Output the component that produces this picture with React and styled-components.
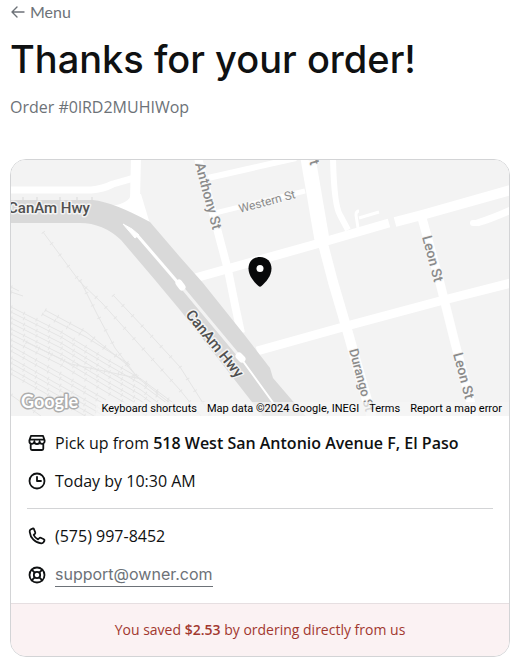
import React from 'react';
import styled, { createGlobalStyle } from 'styled-components';

const GlobalStyle = createGlobalStyle`
  *, *::before, *::after { box-sizing: border-box; }
  body {
    margin: 0;
    background: #fff;
    color: #0f1112;
    font-family: "Open Sans", "Noto Sans", sans-serif;
    font-size: 16px;
    line-height: 24px;
  }
`;

const Page = styled.main`
  padding: 0 19px 0 10px;
`;

const BackLink = styled.a`
  display: flex;
  align-items: center;
  gap: 4px;
  width: fit-content;
  color: #6d7278;
  font-family: Lato, "Open Sans", sans-serif;
  text-decoration: none;
`;

const Title = styled.h1`
  margin: 11px 0 12px;
  font-family: Inter, sans-serif;
  font-size: 38px;
  font-weight: 500;
  line-height: 48px;
`;

const OrderNumber = styled.p`
  margin: 0 0 40px;
  color: #6d7278;
`;

const Card = styled.section`
  overflow: hidden;
  border: 1px solid #d3d4d6;
  border-radius: 16px;
`;

const MapFrame = styled.div`
  position: relative;
  height: 256px;
  overflow: hidden;
  background: #f3f3f3;
`;

const MapDrawing = styled.svg`
  display: block;
  width: 100%;
  height: 100%;
  font-family: Roboto, sans-serif;
`;

const MapFooter = styled.div`
  position: absolute;
  right: 0;
  bottom: 0;
  display: flex;
  gap: 10px;
  padding: 0 7px 0 6px;
  background: rgba(245, 245, 245, 0.7);
  color: #000;
  font-family: Roboto, sans-serif;
  font-size: 11px;
  line-height: 14px;
  white-space: nowrap;
`;

const MapButton = styled.button`
  padding: 0;
  border: 0;
  background: none;
  color: inherit;
  font: inherit;
  cursor: pointer;
`;

const MapLink = styled.a`
  color: inherit;
  text-decoration: none;
`;

const Details = styled.div`
  display: flex;
  flex-direction: column;
  gap: 14px;
  padding: 15px 16px 16px;
`;

const DetailRow = styled.div`
  display: flex;
  align-items: center;
  gap: 8px;
`;

const Icon = styled.svg`
  flex: none;
  width: ${(p) => p.$size || 20}px;
  height: ${(p) => p.$size || 20}px;
  fill: none;
  stroke: currentColor;
  stroke-width: ${(p) => p.$weight || 2};
  stroke-linecap: round;
  stroke-linejoin: round;
`;

const Strong = styled.strong`
  font-weight: 600;
`;

const Divider = styled.hr`
  width: 100%;
  height: 1px;
  margin: 1px 0;
  border: 0;
  background: #d3d4d6;
`;

const EmailLink = styled.a`
  border-bottom: 1px solid #6d7278;
  color: #6d7278;
  font-family: Inter, sans-serif;
  text-decoration: none;
`;

const Savings = styled.p`
  margin: 0;
  padding: 16px;
  border-top: 1px solid #e6dfe1;
  background: #fbf2f3;
  color: #a2382f;
  font-size: 14px;
  line-height: 20px;
  text-align: center;
`;

const RAILS = [
  'M32 72L69 122L91 143L169 230L190 256',
  'M69 120L86 154L104 188L127 218',
  'M102 135L135 170L169 207L192 243L200 256',
  'M34 150L75 172L114 203L127 218L160 244',
  'M31 154L75 177L118 204',
  'M0 127L8 131M0 132L12 136',
  ...[147, 152, 158, 163, 169, 174, 180].map(
    (y) => `M0 ${y}L50 ${y + 25}L95 ${y + 52}L130 ${y + 72}L165 ${y + 98}`
  ),
  ...[186, 191, 198, 203, 209, 214].map(
    (y) => `M0 ${y}L50 ${y + 28}L95 ${y + 54}`
  ),
  'M0 235L30 256',
  'M15 182L60 204L130 219',
];

const ROADS = [
  [7, 'M-2 30H80Q92 29 102 24L123 18'],
  [10, 'M125 -2L124 40'],
  [8, 'M187 -2L202 53L209 80L217 110L224 145L230 173'],
  [6, 'M197 18L285 -2'],
  [5, 'M204 53L294 31'],
  [15, 'M297 -2L311 80'],
  [10, 'M311 80L322 122L337 173L361 258'],
  [6, 'M322 -2Q323 45 329 55L337 70'],
  [9, 'M184 118L309 83L378 63'],
  [10, 'M384 62L411 55L500 30'],
  [3, 'M347 68L345 55Q345 51 348 51M348 58L368 52'],
  [7, 'M466 63Q480 59 500 50'],
  [9, 'M411 58L429 123L444 183L459 240L463 258'],
  [9, 'M246 191L332 167L429 141L500 123'],
];

const STREET_LABELS = [
  ['Anthony St', 184, 4, 75, 14],
  ['Western St', 229, 53, -15, 12],
  ['St', 296, -7, 75, 14],
  ['Durango St', 338, 190, 75, 13],
  ['Leon St', 411, 77, 75, 14],
  ['Leon St', 442, 194, 75, 14],
];

function StreetMap() {
  return (
    <MapDrawing
      viewBox="0 0 498 256"
      preserveAspectRatio="xMidYMid slice"
      role="img"
      aria-label="Map of the pickup location"
    >
      <rect width="498" height="256" fill="#f3f3f3" />
      <g fill="none">
        {RAILS.map((d) => (
          <g key={d} stroke="#e5e5e5">
            <path d={d} />
            <path d={d} strokeWidth="4" strokeDasharray="1 13" />
          </g>
        ))}
      </g>
      <g fill="none" stroke="#fff" strokeLinejoin="round">
        {ROADS.map(([width, d]) => (
          <path key={d} d={d} strokeWidth={width} />
        ))}
        <path d="M462 63h5" strokeWidth="6" strokeLinecap="round" />
      </g>
      <path d="M120 34h10L139 64L100 46Q119 43 120 34Z" fill="#fff" />
      <path
        d="M0 40H82Q102 42 139 62L169 97L192 123L232 173L259 208L262 218L298 260H255L241 242L169 150L144 120L110 80Q92 63 69 63H0Z"
        fill="#d9d9d9"
      />
      <path d="M12 37v3M26 37v3M49 37v3M66 37v3M81 37v3" stroke="#d9d9d9" />
      <path d="M112 64L121 69L128 75L124 78Z" fill="#fff" stroke="#fff" strokeLinejoin="round" />
      <g fill="none" stroke="#fff" strokeLinecap="round">
        <path d="M126 75L169 125" strokeWidth="3" />
        <path d="M169 125L229 197" strokeWidth="3" stroke="#f3f3f3" />
        <path d="M229 197L263 244" strokeWidth="2" />
        <path d="M168 123L171 127M228 196L231 199" strokeWidth="7" />
      </g>
      <g fill="#8b8b8b" stroke="#f7f7f7" strokeWidth="2" strokeLinejoin="round" paintOrder="stroke">
        {STREET_LABELS.map(([name, x, y, angle, size]) => (
          <text
            key={`${name}-${x}`}
            transform={`translate(${x} ${y}) rotate(${angle})`}
            fontSize={size}
            fontWeight={size > 12 ? 500 : 400}
          >
            {name}
          </text>
        ))}
      </g>
      <g
        fill="#505050"
        stroke="#f3f3f3"
        strokeWidth="3"
        strokeLinejoin="round"
        paintOrder="stroke"
        fontSize="15"
        fontWeight="500"
      >
        <text x="-3" y="53">CanAm Hwy</text>
        <text transform="translate(174 155) rotate(51)">CanAm Hwy</text>
      </g>
      <text
        x="10"
        y="248"
        fill="#fff"
        stroke="#adadad"
        strokeWidth="3"
        strokeLinejoin="round"
        paintOrder="stroke"
        fontFamily="Lato, sans-serif"
        fontSize="18"
        fontWeight="700"
      >
        Google
      </text>
      <path
        d="M249 97C242 97 237.500 102 237.500 108.500C237.500 116 243.500 122.500 247.500 126Q249 127.300 250.500 126C254.500 122.500 260.500 116 260.500 108.500C260.500 102 256 97 249 97Z"
        fill="#08090a"
      />
      <circle cx="249" cy="108.500" r="3.500" fill="#fff" />
    </MapDrawing>
  );
}

export default function App() {
  return (
    <>
      <GlobalStyle />
      <Page>
        <BackLink href="#menu">
          <Icon viewBox="0 0 16 16" $size={16} $weight={1.4} aria-hidden="true">
            <path d="M14 8H2.500M7 3L2 8L7 13" />
          </Icon>
          Menu
        </BackLink>
        <Title>Thanks for your order!</Title>
        <OrderNumber>Order #0lRD2MUHIWop</OrderNumber>
        <Card>
          <MapFrame>
            <StreetMap />
            <MapFooter>
              <MapButton type="button">Keyboard shortcuts</MapButton>
              <span>Map data ©2024 Google, INEGI</span>
              <MapLink href="#terms">Terms</MapLink>
              <MapLink href="#report">Report a map error</MapLink>
            </MapFooter>
          </MapFrame>
          <Details>
            <DetailRow>
              <Icon viewBox="0 0 20 20" $weight={1.8} aria-hidden="true">
                <path d="M4 2.800H16L17.600 7.300V8.200A2.500 2.500 0 0 1 12.600 8.400A2.600 2.600 0 0 1 7.400 8.400A2.500 2.500 0 0 1 2.400 8.200V7.300ZM2.600 6.600H17.400M3.700 11V15.600Q3.700 17 5 17H15Q16.300 17 16.300 15.600V11" />
              </Icon>
              <span>
                Pick up from <Strong>518 West San Antonio Avenue F, El Paso</Strong>
              </span>
            </DetailRow>
            <DetailRow>
              <Icon viewBox="0 0 20 20" $weight={1.8} aria-hidden="true">
                <circle cx="10" cy="10" r="7.500" />
                <path d="M10 5.800V10H14" />
              </Icon>
              <span>Today by 10:30 AM</span>
            </DetailRow>
            <Divider />
            <DetailRow>
              <Icon viewBox="0 0 20 20" $weight={1.8} aria-hidden="true">
                <path d="M5.500 2.600L3.600 3.500Q2.500 4.200 2.700 5.800C3.400 12 8 16.800 14.200 17.300Q15.800 17.400 16.500 16.300L17.400 14.700Q17.700 13.700 16.800 13.200L13.700 11.800Q12.900 11.500 12.300 12.100L11 13.300Q8 12 6.700 9L8 7.700Q8.500 7.100 8.200 6.300L7 3.200Q6.500 2.200 5.500 2.600Z" />
              </Icon>
              <span>(575) 997-8452</span>
            </DetailRow>
            <DetailRow>
              <Icon viewBox="0 0 20 20" $weight={1.8} aria-hidden="true">
                <circle cx="10" cy="10" r="7.500" />
                <circle cx="10" cy="10" r="3.200" />
                <path d="M4.700 4.700L7.700 7.700M15.300 4.700L12.300 7.700M4.700 15.300L7.700 12.300M15.300 15.300L12.300 12.300" />
              </Icon>
              <EmailLink href="mailto:support@owner.com">support@owner.com</EmailLink>
            </DetailRow>
          </Details>
          <Savings>
            You saved <Strong>$2.53</Strong> by ordering directly from us
          </Savings>
        </Card>
      </Page>
    </>
  );
}
